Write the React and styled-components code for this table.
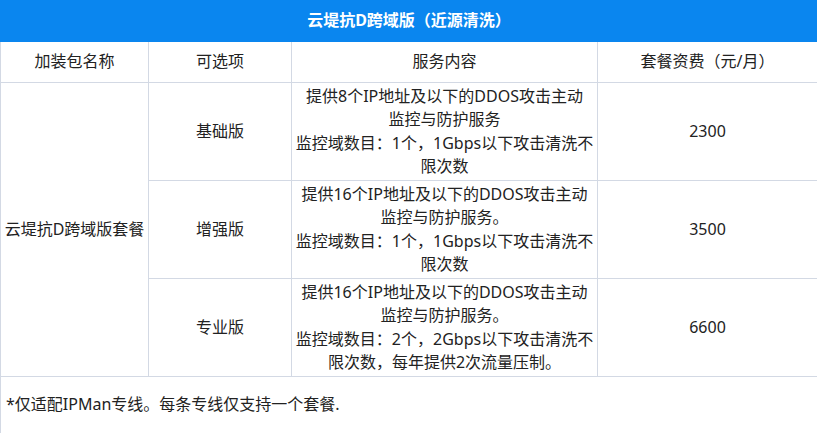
import styled, { createGlobalStyle } from 'styled-components';

const GlobalStyle = createGlobalStyle`
  body {
    margin: 0;
    background: #ffffff;
    font-family: "Noto Sans", "Noto Sans CJK SC", sans-serif;
    color: #222;
  }
`;

const Table = styled.table`
  width: 817px;
  border-collapse: collapse;
  table-layout: fixed;
  font-size: 16px;
  line-height: 23.5px;
`;

const TitleCell = styled.th`
  height: 40px;
  padding: 0;
  background: #0a86ef;
  color: #fff;
  font-weight: bold;
  text-align: center;
  border: 1px solid #0a86ef;
`;

const HeadCell = styled.th`
  height: 40px;
  padding: 0;
  font-weight: normal;
  text-align: center;
  border: 1px solid #d3d9e4;
`;

const Cell = styled.td`
  height: ${p => p.$h || 97}px;
  padding: 0 2px;
  text-align: ${p => p.$align || 'center'};
  vertical-align: middle;
  border: 1px solid #d3d9e4;
`;

const Line = styled.span`
  display: block;
  white-space: nowrap;
`;

const Note = styled.td`
  height: 56px;
  padding: 0 5px;
  text-align: left;
  border: 1px solid #d3d9e4;
`;

const plans = [
  {
    name: '基础版',
    lines: ['提供8个IP地址及以下的DDOS攻击主动', '监控与防护服务', '监控域数目：1个，1Gbps以下攻击清洗不', '限次数'],
    price: '2300',
  },
  {
    name: '增强版',
    lines: ['提供16个IP地址及以下的DDOS攻击主动', '监控与防护服务。', '监控域数目：1个，1Gbps以下攻击清洗不', '限次数'],
    price: '3500',
  },
  {
    name: '专业版',
    lines: ['提供16个IP地址及以下的DDOS攻击主动', '监控与防护服务。', '监控域数目：2个，2Gbps以下攻击清洗不', '限次数，每年提供2次流量压制。'],
    price: '6600',
  },
];

const App = () => {
  return (
    <>
      <GlobalStyle />
      <Table>
        <colgroup>
          <col style={{ width: 148 }} />
          <col style={{ width: 143 }} />
          <col style={{ width: 306 }} />
          <col style={{ width: 220 }} />
        </colgroup>
        <thead>
          <tr>
            <TitleCell colSpan={4}>云堤抗D跨域版（近源清洗）</TitleCell>
          </tr>
          <tr>
            <HeadCell>加装包名称</HeadCell>
            <HeadCell>可选项</HeadCell>
            <HeadCell>服务内容</HeadCell>
            <HeadCell>套餐资费（元/月）</HeadCell>
          </tr>
        </thead>
        <tbody>
          {plans.map((plan, i) => (
            <tr key={plan.name}>
              {i === 0 && <Cell rowSpan={3}>云堤抗D跨域版套餐</Cell>}
              <Cell>{plan.name}</Cell>
              <Cell>
                {plan.lines.map(l => <Line key={l}>{l}</Line>)}
              </Cell>
              <Cell>{plan.price}</Cell>
            </tr>
          ))}
          <tr>
            <Note colSpan={4}>*仅适配IPMan专线。每条专线仅支持一个套餐.</Note>
          </tr>
        </tbody>
      </Table>
    </>
  );
};

export default App;
